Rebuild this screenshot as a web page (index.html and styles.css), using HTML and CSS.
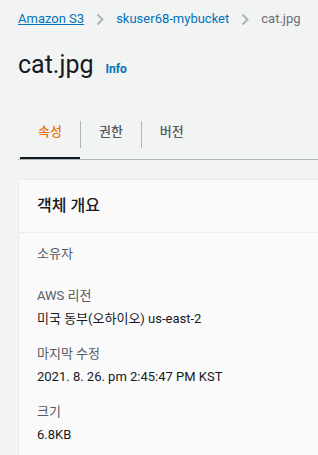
FILE: index.html
```html
<!DOCTYPE html>
<html lang="ko">
<head>
    <meta charset="UTF-8">
    <meta name="viewport" content="width=device-width, initial-scale=1.0">
    <title>cat.jpg - Amazon S3</title>
    <link rel="stylesheet" href="styles.css">
</head>
<body>
    <div class="page">
        <nav class="breadcrumbs">
            <a href="#" class="crumb-link">Amazon S3</a>
            <svg class="chevron" width="8" height="13" viewBox="0 0 8 13"><path d="M1.5 1.5l5 5-5 5" fill="none" stroke="#aab7b8" stroke-width="2"/></svg>
            <span class="crumb-plain">skuser68-mybucket</span>
            <svg class="chevron" width="8" height="13" viewBox="0 0 8 13"><path d="M1.5 1.5l5 5-5 5" fill="none" stroke="#aab7b8" stroke-width="2"/></svg>
            <span class="crumb-current">cat.jpg</span>
        </nav>

        <div class="title-row">
            <h1>cat.jpg</h1>
            <a href="#" class="info">Info</a>
        </div>

        <div class="tabs">
            <div class="tab active">속성</div>
            <span class="tab-sep"></span>
            <div class="tab">권한</div>
            <span class="tab-sep"></span>
            <div class="tab">버전</div>
        </div>

        <section class="card">
            <div class="card-header">객체 개요</div>
            <div class="card-body">
                <div class="field">
                    <div class="label">소유자</div>
                    <div class="value empty"></div>
                </div>
                <div class="field">
                    <div class="label">AWS 리전</div>
                    <div class="value">미국 동부(오하이오) us-east-2</div>
                </div>
                <div class="field">
                    <div class="label">마지막 수정</div>
                    <div class="value">2021. 8. 26. pm 2:45:47 PM KST</div>
                </div>
                <div class="field">
                    <div class="label">크기</div>
                    <div class="value">6.8KB</div>
                </div>
            </div>
        </section>
    </div>
</body>
</html>
```

FILE: styles.css
```css
body {
    margin: 0;
    padding: 0;
    background-color: #f2f3f3;
    color: #16191f;
    font-family: Roboto, "Noto Sans CJK KR", sans-serif;
    overflow: hidden;
}

.page {
    padding-left: 18px;
}

.breadcrumbs {
    display: flex;
    align-items: center;
    gap: 12px;
    padding-top: 9px;
    font-size: 13px;
    line-height: 20px;
}

.crumb-link {
    color: #0073bb;
    text-decoration: underline;
}

.crumb-plain {
    color: #0073bb;
}

.crumb-current {
    color: #687078;
}

.chevron {
    display: block;
}

.title-row {
    display: flex;
    align-items: baseline;
    gap: 12px;
    margin-top: 20px;
}

h1 {
    margin: 0;
    font-size: 25px;
    line-height: 32px;
    font-weight: 400;
    color: #16191f;
}

.info {
    color: #0073bb;
    font-size: 12px;
    font-weight: 700;
    text-decoration: none;
}

.tabs {
    display: flex;
    align-items: center;
    margin-top: 29px;
    padding-left: 2px;
    border-bottom: 1px solid #aab7b8;
}

.tab {
    padding: 12px 18px 15px;
    font-size: 13px;
    line-height: 20px;
    font-weight: 500;
    color: #545b64;
    border-bottom: 2px solid transparent;
}

.tab.active {
    color: #ec7211;
    border-bottom-color: #16191f;
}

.tab-sep {
    width: 1px;
    height: 27px;
    background-color: #aab7b8;
}

.card {
    margin-top: 19px;
    background-color: #fafafa;
    border: 1px solid #e9ebed;
    border-right: none;
}

.card-header {
    padding: 15px 18px;
    font-size: 16px;
    line-height: 22px;
    font-weight: 500;
    border-bottom: 1px solid #eaeded;
}

.card-body {
    padding: 10px 18px 20px;
    display: flex;
    flex-direction: column;
    gap: 12px;
    font-size: 13px;
}

.label {
    color: #545b64;
    line-height: 22px;
}

.value {
    color: #16191f;
    line-height: 24px;
}

.value.empty {
    height: 8px;
}
```
